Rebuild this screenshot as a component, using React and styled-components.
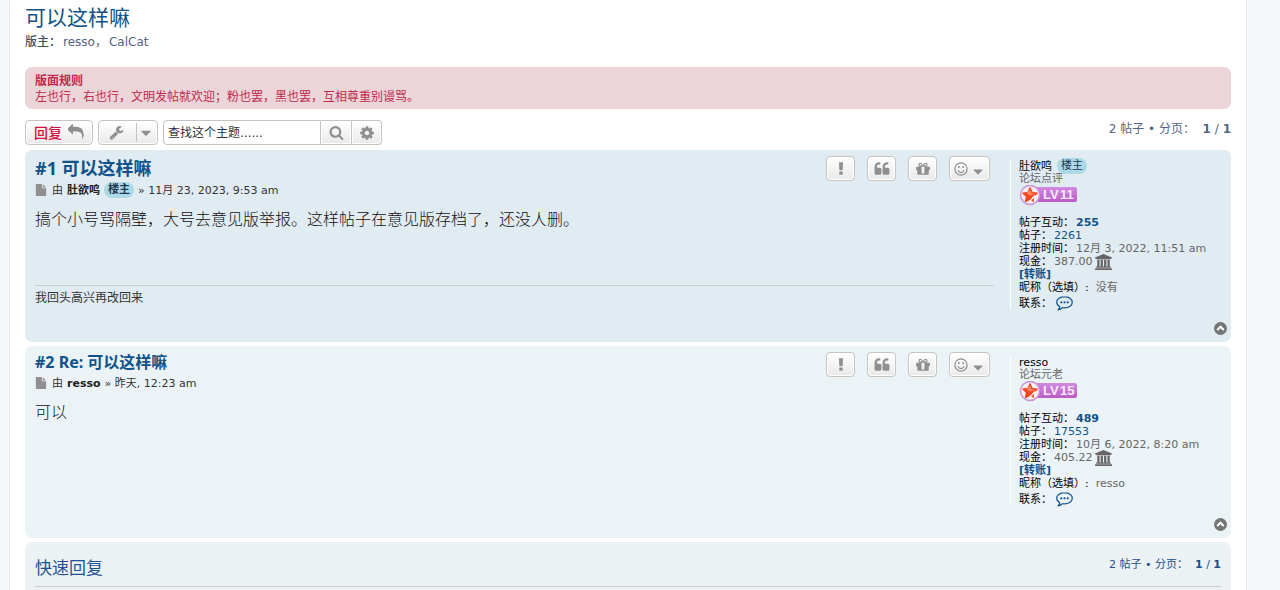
import React from "react";
import styled, { createGlobalStyle } from "styled-components";

const latin = `"DejaVu Sans", "Noto Sans CJK SC", sans-serif`;
const heading = `"Noto Sans", "Noto Sans CJK SC", sans-serif`;

const GlobalStyle = createGlobalStyle`
  *, *::before, *::after { box-sizing: border-box; }
  html { background: #f5f7fa; }
  body { margin: 0; font: 11px/13px ${latin}; color: #536482; }
  h1, h2, h3, p, dl, dd { margin: 0; }
  button, input { font-family: inherit; }
  svg { display: block; flex: none; }
`;

const Wrap = styled.div`
  margin: 0 33px 0 9px;
  min-height: 100vh;
  padding: 4px 15px 0;
  background: #fff;
  border: solid #e6e9ed;
  border-width: 0 1px;
`;
const Link = styled.a`
  color: ${(p) => p.$color || "#105289"};
  font-weight: ${(p) => (p.$bold ? 700 : 400)};
  text-decoration: none;
`;
const TopicTitle = styled.h1`
  font: 400 21px/26px ${heading};
`;
const Moderators = styled.p`
  display: flex;
  gap: 2px;
  margin-top: 4px;
  font-size: 12px;
  line-height: 16px;
  strong { font-weight: 500; color: #3f4f6c; }
`;
const Rules = styled.section`
  margin: 17px 0 11px;
  padding: 5px;
  padding-left: 10px;
  border-radius: 7px;
  background: #ecd5d8;
  color: #bc2a4d;
  font: 12px/16px "Noto Sans CJK SC", sans-serif;
  h2 { font-size: 12px; line-height: 16px; }
`;
const ActionBar = styled.div`
  display: flex;
  align-items: flex-start;
  gap: 5px;
  margin-bottom: 5px;
`;
const Button = styled.button`
  display: inline-flex;
  align-items: center;
  justify-content: center;
  gap: 6px;
  height: 25px;
  padding: 0 8px;
  border: 1px solid #c7c3bf;
  border-radius: 4px;
  background: linear-gradient(#fff, #e9e9e9);
  box-shadow: 0 0 0 1px #fff inset;
  color: #8f8f8f;
  font-size: 14px;
`;
const ReplyButton = styled(Button)`
  width: 68px;
  padding-bottom: 2px;
  color: #d31141;
  font-family: "Noto Sans CJK SC", sans-serif;
  font-weight: 500;
  line-height: 20px;
  svg { color: #8f8f8f; }
`;
const ToolsButton = styled(Button)`
  width: 60px;
  padding: 0 3px 0 10px;
  gap: 0;
  justify-content: space-between;
`;
const Divider = styled.span`
  width: 1px;
  height: 19px;
  margin: 0 -6px 0 4px;
  background: #c7c3bf;
`;
const SearchBox = styled.form`
  display: flex;
  input {
    width: 158px;
    height: 25px;
    padding: 0 4px;
    border: 1px solid #c7c3bf;
    border-radius: 4px 0 0 4px;
    background: #fff;
    font-size: 12px;
    color: #333;
  }
  input::placeholder { color: #333; opacity: 1; }
`;
const SearchButton = styled(Button)`
  width: ${(p) => (p.$last ? 30 : 31)}px;
  padding: 0;
  border-left-width: 0;
  border-radius: ${(p) => (p.$last ? "0 4px 4px 0" : "0")};
`;
const Pager = styled.p`
  margin-left: auto;
  padding-top: 1px;
  font-size: ${(p) => (p.$small ? 11 : 12)}px;
  line-height: 16px;
  color: ${(p) => p.$color || "#536482"};
  white-space: pre;
  strong { font-weight: 600; }
`;
const PostCard = styled.article`
  position: relative;
  display: flex;
  min-height: 192px;
  margin-bottom: 4px;
  padding: 0 0 0 10px;
  border-radius: 7px;
  background: ${(p) => p.$bg};
`;
const PostBody = styled.div`
  flex: 1;
  min-width: 0;
  padding-top: 6px;
`;
const PostHead = styled.header`
  display: flex;
  justify-content: space-between;
  align-items: flex-start;
  height: ${(p) => (p.$first ? 26 : 23)}px;
  padding-right: 4px;
`;
const PostTitle = styled.h3`
  font: 700 ${(p) => (p.$first ? 18 : 16)}px/${(p) => (p.$first ? 24 : 20)}px ${heading};
`;
const PostButtons = styled.div`
  display: flex;
  gap: 12px;
`;
const PostButton = styled(Button)`
  width: ${(p) => (p.$wide ? 41 : 29)}px;
  padding: 0;
  gap: 2px;
`;
const Byline = styled.p`
  display: flex;
  align-items: center;
  gap: 4px;
  height: 16px;
  color: #333;
  svg { color: #8f8f8f; margin-right: 1px; }
`;
const Starter = styled.span`
  display: inline-block;
  padding: 0 4px;
  border-radius: 8px;
  background: #add8e6;
  color: #1b3a57;
  font-weight: ${(p) => (p.$bold ? 600 : 400)};
  line-height: 16px;
`;
const Content = styled.div`
  margin-top: 8px;
  font: 16px/24px "Noto Sans CJK SC", sans-serif;
  font-weight: 300;
  color: #111;
`;
const Signature = styled.div`
  margin: 55px 0 0;
  padding-top: 3px;
  border-top: 1px solid #ccc;
  color: #333;
  font: 12px/16px "Noto Sans CJK SC", sans-serif;
`;
const Profile = styled.aside`
  width: 221px;
  height: 150px;
  margin: 10px 0 0 16px;
  padding-left: 8px;
  border-left: 1px solid #fff;
  color: #666;
`;
const UserLine = styled.div`
  display: flex;
  align-items: center;
  gap: 5px;
  height: 12px;
`;
const Details = styled.dl`
  margin-top: 10px;
`;
const Row = styled.div`
  display: flex;
  align-items: center;
  height: ${(p) => p.$height || 13}px;
  dt { color: #000; margin-right: ${(p) => p.$gap || 2}px; }
  dd { display: flex; align-items: center; gap: 2px; }
`;
const TopLink = styled.a`
  position: absolute;
  right: 4px;
  bottom: 7px;
  color: #757575;
`;
const QuickReply = styled.section`
  min-height: 60px;
  padding: 14px 10px 0;
  border-radius: 7px 7px 0 0;
  background: #ecf1f3;
`;
const QuickHead = styled.div`
  display: flex;
  align-items: flex-start;
  height: 31px;
  border-bottom: 1px solid #ccc;
  h2 { font: 400 17px/24px ${heading}; color: #1f5297; }
`;

const icons = {
  reply: "M1792 1120q0 166-127 451-3 7-10.5 24t-13.5 30-13 22q-12 17-28 17-15 0-23.5-10t-8.5-25q0-9 2.5-26.5t2.5-23.5q5-68 5-123 0-112-19.5-200.5t-54-153.5-89-112-120-78.5-144.5-48.5-173-24.5-196.5-7h-224v256q0 26-19 45t-45 19-45-19l-512-512q-19-19-19-45t19-45l512-512q19-19 45-19t45 19 19 45v256h224q713 0 875 403 53 134 53 333z",
  wrench: "M448 1472q0-26-19-45t-45-19-45 19-19 45 19 45 45 19 45-19 19-45zm644-420l-682 682q-37 37-90 37-52 0-91-37l-106-108q-38-36-38-90 0-53 38-91l681-681q39 98 114.5 173.5t173.5 114.5zm634-435q0 39-23 106-47 134-164.5 217.5t-258.5 83.5q-185 0-316.5-131.5t-131.5-316.5 131.5-316.5 316.5-131.5q58 0 121.5 16.5t107.5 46.5q16 11 16 28t-16 28l-293 169v224l193 107q5-3 79-48.5t135.5-81 70.5-35.5q15 0 23.5 10t8.5 25z",
  caret: "M1408 704q0 26-19 45l-448 448q-19 19-45 19t-45-19l-448-448q-19-19-19-45t19-45 45-19h896q26 0 45 19t19 45z",
  search: "M1216 832q0-185-131.5-316.5t-316.5-131.5-316.5 131.5-131.5 316.5 131.5 316.5 316.5 131.5 316.5-131.5 131.5-316.5zm512 832q0 52-38 90t-90 38q-54 0-90-38l-343-342q-179 124-399 124-143 0-273.5-55.5t-225-150-150-225-55.5-273.5 55.5-273.5 150-225 225-150 273.5-55.5 273.5 55.5 225 150 150 225 55.5 273.5q0 220-124 399l343 343q37 37 37 90z",
  cog: "M1152 896q0-106-75-181t-181-75-181 75-75 181 75 181 181 75 181-75 75-181zm512-109v222q0 12-8 23t-20 13l-185 28q-19 54-39 91 35 50 107 138 10 12 10 25t-9 23q-27 37-99 108t-94 71q-12 0-26-9l-138-108q-44 23-91 38-16 136-29 186-7 28-36 28h-222q-14 0-24.5-8.5t-11.5-21.5l-28-184q-49-16-90-37l-141 107q-10 9-25 9-14 0-25-11-126-114-165-168-7-10-7-23 0-12 8-23 15-21 51-66.5t54-70.5q-27-50-41-99l-183-27q-13-2-21-12.5t-8-23.5v-222q0-12 8-23t19-13l186-28q14-46 39-92-40-57-107-138-10-12-10-24 0-10 9-23 26-36 98.5-107.5t94.5-71.5q13 0 26 10l138 107q44-23 91-38 16-136 29-186 7-28 36-28h222q14 0 24.5 8.5t11.5 21.5l28 184q49 16 90 37l142-107q9-9 24-9 13 0 25 10 129 119 165 170 7 8 7 22 0 12-8 23-15 21-51 66.5t-54 70.5q26 50 41 98l183 28q13 2 21 12.5t8 23.5z",
  report: "M1088 1248v224q0 26-19 45t-45 19h-256q-26 0-45-19t-19-45v-224q0-26 19-45t45-19h256q26 0 45 19t19 45zm30-1056l-28 768q-1 26-20.5 45t-45.5 19h-256q-26 0-45.5-19t-20.5-45l-28-768q-1-26 17.5-45t44.5-19h320q26 0 44.5 19t17.5 45z",
  quote: "M832 960v384q0 80-56 136t-136 56h-384q-80 0-136-56t-56-136v-704q0-104 40.5-198.5t109.5-163.5 163.5-109.5 198.5-40.5h64q26 0 45 19t19 45v128q0 26-19 45t-45 19h-64q-106 0-181 75t-75 181v32q0 40 28 68t68 28h224q80 0 136 56t56 136zm896 0v384q0 80-56 136t-136 56h-384q-80 0-136-56t-56-136v-704q0-104 40.5-198.5t109.5-163.5 163.5-109.5 198.5-40.5h64q26 0 45 19t19 45v128q0 26-19 45t-45 19h-64q-106 0-181 75t-75 181v32q0 40 28 68t68 28h224q80 0 136 56t56 136z",
  gift: "M1056 1356v-716h-320v716q0 25 18 38.5t46 13.5h192q28 0 46-13.5t18-38.5zm-456-844h195l-126-161q-26-31-69-31-40 0-68 28t-28 68 28 68 68 28zm688-96q0-40-28-68t-68-28q-43 0-69 31l-125 161h194q40 0 68-28t28-68zm376 256v320q0 14-9 23t-23 9h-96v416q0 40-28 68t-68 28h-1088q-40 0-68-28t-28-68v-416h-96q-14 0-23-9t-9-23v-320q0-14 9-23t23-9h440q-93 0-158.5-65.5t-65.5-158.5 65.5-158.5 158.5-65.5q107 0 168 77l128 165 128-165q61-77 168-77 93 0 158.5 65.5t65.5 158.5-65.5 158.5-158.5 65.5h440q14 0 23 9t9 23z",
  file: "M1152 512v-472q22 14 36 28l408 408q14 14 28 36h-472zm-128 32q0 40 28 68t68 28h544v1056q0 40-28 68t-68 28h-1344q-40 0-68-28t-28-68v-1600q0-40 28-68t68-28h800v544z",
};

function Icon({ name, size = 14, box = "0 0 1792 1792" }) {
  return (
    <svg width={size} height={size} viewBox={box} fill="currentColor" aria-hidden="true">
      <path d={icons[name]} />
    </svg>
  );
}

function SmileIcon() {
  return (
    <svg width="14" height="14" viewBox="0 0 14 14" fill="none" stroke="currentColor" aria-hidden="true">
      <circle cx="7" cy="7" r="6.1" strokeWidth="1.2" />
      <path d="M4 8.4c.5 1.4 1.6 2.2 3 2.2s2.5-.8 3-2.2" strokeWidth="1.1" strokeLinecap="round" />
      <circle cx="4.9" cy="5" r="1" fill="currentColor" stroke="none" />
      <circle cx="9.1" cy="5" r="1" fill="currentColor" stroke="none" />
    </svg>
  );
}

function BankIcon() {
  return (
    <svg width="17" height="16" viewBox="0 0 1920 1792" fill="currentColor" aria-hidden="true">
      <path d="M960 0l960 384v128h-128q0 26-20.5 45t-48.5 19h-1526q-28 0-48.5-19t-20.5-45h-128v-128zM256 640h256v768h128v-768h256v768h128v-768h256v768h128v-768h256v768h59q28 0 48.5 19t20.5 45v64h-1664v-64q0-26 20.5-45t48.5-19h59zM1851 1600q28 0 48.5 19t20.5 45v128h-1920v-128q0-26 20.5-45t48.5-19h1782z" />
    </svg>
  );
}

function CommentIcon() {
  return (
    <svg width="17" height="15" viewBox="0 0 17 15" fill="none" stroke="currentColor" aria-hidden="true">
      <path d="M8.5.7C4.2.7.7 3.2.7 6.3c0 1.8 1.2 3.4 3.1 4.4-.2 1.1-.7 2.2-1.7 3.2 1.8-.2 3.3-1 4.4-2.2.7.1 1.3.2 2 .2 4.3 0 7.8-2.5 7.8-5.6S12.8.7 8.5.7z" strokeWidth="1.2" strokeLinejoin="round" />
      <g fill="currentColor" stroke="none">
        <circle cx="5.3" cy="6.3" r="1.1" />
        <circle cx="8.5" cy="6.3" r="1.1" />
        <circle cx="11.7" cy="6.3" r="1.1" />
      </g>
    </svg>
  );
}

function UpIcon() {
  return (
    <svg width="13" height="13" viewBox="0 0 13 13" aria-hidden="true">
      <circle cx="6.5" cy="6.5" r="6.5" fill="currentColor" />
      <path d="M3.2 8l3.3-3.3L9.8 8" fill="none" stroke="#fff" strokeWidth="2" />
    </svg>
  );
}

function LevelBadge({ level }) {
  const id = `level-${level}`;
  return (
    <svg width="59" height="21" viewBox="0 0 59 21" role="img" aria-label={`LV${level}`}>
      <defs>
        <linearGradient id={id} x1="0" y1="0" x2="0" y2="1">
          <stop offset="0" stopColor="#d18be0" />
          <stop offset="1" stopColor="#b95cc6" />
        </linearGradient>
      </defs>
      <rect x="10" y="2" width="48" height="15" rx="2" fill={`url(#${id})`} />
      <circle cx="11" cy="10" r="9.5" fill="#faeef5" stroke="#cc93d8" strokeWidth="1.5" />
      <path d="M11 2.5l2.3 4.900 5.200.7-3.800 3.600 1 5.300L11 14.400l-4.700 2.600 1-5.300-3.800-3.600 5.200-.7z" fill="#f0461f" stroke="#f0461f" strokeWidth="1" strokeLinejoin="round" />
      <path d="M11 4.700l1.500 3.600 3.800.4L11 10.500 7.500 8.500z" fill="#ff8a62" />
      <path d="M16 10.500l-5 5.500M15.500 13v4" stroke="#fff" strokeWidth="1.2" />
      <g fill="#fbeaff" fontFamily="Liberation Sans, sans-serif" fontWeight="700" fontSize="13">
        <text x="24" y="14">LV</text>
        <text x="41" y="14">{level}</text>
      </g>
    </svg>
  );
}

function Pagination({ color, small }) {
  return (
    <Pager $color={color} $small={small}>
      {"2 帖子 • 分页：  "}<strong>1</strong> / <strong>1</strong>
    </Pager>
  );
}

function Post({ post }) {
  return (
    <PostCard $bg={post.bg}>
      <PostBody>
        <PostHead $first={post.starter}>
          <PostTitle $first={post.starter}><Link $bold href="#post">{post.title}</Link></PostTitle>
          <PostButtons>
            <PostButton aria-label="举报"><Icon name="report" size={16} /></PostButton>
            <PostButton aria-label="引用"><Icon name="quote" size={16} /></PostButton>
            <PostButton aria-label="赠送"><Icon name="gift" size={16} /></PostButton>
            <PostButton $wide aria-label="表情"><SmileIcon /><Icon name="caret" size={16} box="0 -300 1792 1792" /></PostButton>
          </PostButtons>
        </PostHead>
        <Byline>
          <Icon name="file" size={12} />
          <span>由</span>
          <Link $bold $color="#222" href="#user">{post.user}</Link>
          {post.starter && <Starter $bold>楼主</Starter>}
          <span>» {post.date}</span>
        </Byline>
        <Content>{post.text}</Content>
        {post.signature && <Signature>{post.signature}</Signature>}
      </PostBody>
      <Profile>
        <UserLine>
          <Link $color="#000" href="#user">{post.user}</Link>
          {post.starter && <Starter>楼主</Starter>}
        </UserLine>
        <div>{post.rank}</div>
        <LevelBadge level={post.level} />
        <Details>
          <Row><dt>帖子互动：</dt><dd><Link $bold href="#likes">{post.likes}</Link></dd></Row>
          <Row><dt>帖子：</dt><dd><Link href="#posts">{post.posts}</Link></dd></Row>
          <Row><dt>注册时间：</dt><dd>{post.joined}</dd></Row>
          <Row><dt>现金：</dt><dd>{post.cash} <BankIcon /></dd></Row>
          <Row><dd><Link $bold href="#transfer">[转账]</Link></dd></Row>
          <Row $gap={7}><dt>昵称（选填）:</dt><dd>{post.nick}</dd></Row>
          <Row $height={18} $gap={4}><dt>联系：</dt><dd><Link href="#contact" aria-label="联系"><CommentIcon /></Link></dd></Row>
        </Details>
      </Profile>
      <TopLink href="#top" aria-label="页首"><UpIcon /></TopLink>
    </PostCard>
  );
}

const posts = [
  {
    bg: "#e1ebf2", starter: true, title: "#1 可以这样嘛", user: "肚欲鸣", date: "11月 23, 2023, 9:53 am",
    text: "搞个小号骂隔壁，大号去意见版举报。这样帖子在意见版存档了，还没人删。",
    signature: "我回头高兴再改回来", rank: "论坛点评", level: 11, likes: 255, posts: 2261,
    joined: "12月 3, 2022, 11:51 am", cash: "387.00", nick: "没有",
  },
  {
    bg: "#ebf3f7", starter: false, title: "#2 Re: 可以这样嘛", user: "resso", date: "昨天, 12:23 am",
    text: "可以", rank: "论坛元老", level: 15, likes: 489, posts: 17553,
    joined: "10月 6, 2022, 8:20 am", cash: "405.22", nick: "resso",
  },
];

export default function App() {
  return (
    <>
      <GlobalStyle />
      <Wrap>
        <TopicTitle><Link href="#topic">可以这样嘛</Link></TopicTitle>
        <Moderators>
          <strong>版主：</strong>
          <span><Link $color="#536482" href="#resso">resso</Link>，</span>
          <Link $color="#536482" href="#calcat">CalCat</Link>
        </Moderators>
        <Rules>
          <h2>版面规则</h2>
          <p>左也行，右也行，文明发帖就欢迎；粉也罢，黑也罢，互相尊重别谩骂。</p>
        </Rules>
        <ActionBar>
          <ReplyButton>回复 <Icon name="reply" size={16} /></ReplyButton>
          <ToolsButton aria-label="主题工具"><Icon name="wrench" size={15} /><Divider /><Icon name="caret" size={16} /></ToolsButton>
          <SearchBox>
            <input type="search" aria-label="查找这个主题" placeholder="查找这个主题......" />
            <SearchButton type="submit" aria-label="搜索"><Icon name="search" size={15} /></SearchButton>
            <SearchButton type="button" $last aria-label="高级搜索"><Icon name="cog" size={16} /></SearchButton>
          </SearchBox>
          <Pagination />
        </ActionBar>
        {posts.map((post) => <Post key={post.level} post={post} />)}
        <QuickReply>
          <QuickHead>
            <h2>快速回复</h2>
            <Pagination small color="#1f4f8c" />
          </QuickHead>
        </QuickReply>
      </Wrap>
    </>
  );
}
